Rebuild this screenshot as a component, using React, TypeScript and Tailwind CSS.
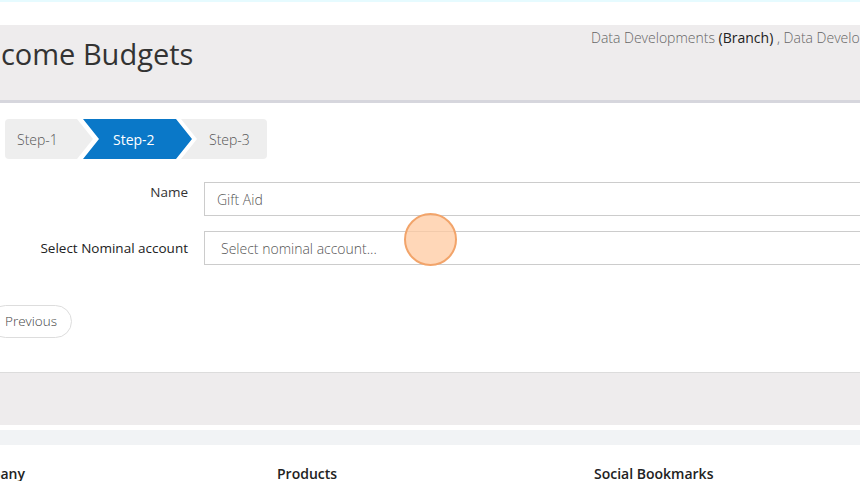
import React from 'react';

const steps = [
  {
    label: 'Step-1',
    active: false,
    className: 'w-[88px] pl-[12px] rounded-l-[4px] [clip-path:polygon(0_0,72px_0,88px_50%,72px_100%,0_100%)]',
  },
  {
    label: 'Step-2',
    active: true,
    className: 'w-[109px] -ml-[10px] pl-[30px] [clip-path:polygon(0_0,93px_0,109px_50%,93px_100%,0_100%,16px_50%)]',
  },
  {
    label: 'Step-3',
    active: false,
    className: 'w-[86px] -ml-[11px] pl-[28px] rounded-r-[4px] [clip-path:polygon(0_0,100%_0,100%_100%,0_100%,16px_50%)]',
  },
];

const App: React.FC = () => {
  return (
    <div className="relative w-[860px] h-[481px] overflow-hidden bg-white font-['Open_Sans',sans-serif] text-[14px] text-[#555]">
      <div className="h-[2px] bg-[#e6fbff]" />

      {/* page header */}
      <div className="mt-[23px] h-[78px] bg-[#eeeced] border-b-[3px] border-[#d6d6dd] flex items-start">
        <h1 className="-ml-[25px] w-[616px] shrink-0 mt-[10px] text-[29px] leading-[38px] text-[#333] font-normal whitespace-nowrap">
          Income Budgets
        </h1>
        <div className="pt-[3px] whitespace-nowrap text-[#666] font-light leading-[20px]">
          Data Developments <span className="text-[#222] font-normal">(Branch)</span> , Data Developments
        </div>
      </div>

      {/* wizard steps */}
      <div className="mt-[16px] ml-[5px] flex h-[40px] font-light">
        {steps.map((s) => (
          <div
            key={s.label}
            className={`h-[40px] flex items-center shrink-0 ${s.className} ${
              s.active ? 'bg-[#0a78c8] text-white font-normal' : 'bg-[#eeeeee] text-[#555]'
            }`}
          >
            {s.label}
          </div>
        ))}
      </div>

      {/* form */}
      <div className="mt-[23px] flex flex-col gap-[15px] text-[13.5px]">
        <div className="flex items-start gap-[16px]">
          <label className="w-[188px] shrink-0 text-right text-[#333]">Name</label>
          <div className="w-[700px] shrink-0 h-[34px] border border-[#cccccc] flex items-center pl-[12px] text-[14px] font-light text-[#555]">
            Gift Aid
          </div>
        </div>
        <div className="flex items-center gap-[16px]">
          <label className="w-[188px] shrink-0 text-right text-[#222]">Select Nominal account</label>
          <div className="w-[700px] shrink-0 h-[34px] border border-[#cccccc] flex items-center pl-[16px] text-[14px] font-light text-[#555]">
            Select nominal account...
          </div>
        </div>
      </div>

      <div className="mt-[40px]">
        <button className="-ml-[11px] h-[33px] pl-[15px] pr-[14px] rounded-full border border-[#dddddd] bg-white font-light text-[13.5px] text-[#444]">
          Previous
        </button>
      </div>

      {/* form footer band */}
      <div className="mt-[34px] h-[53px] border-t border-[#dcdcdc] bg-[#eeeced]" />
      <div className="mt-[5px] h-[15px] bg-[#f1f3f5]" />

      {/* site footer */}
      <div className="mt-[18px] -ml-[39px] flex font-semibold text-[#222]">
        <div className="w-[316px] shrink-0">Company</div>
        <div className="w-[317px] shrink-0">Products</div>
        <div className="shrink-0">Social Bookmarks</div>
      </div>

      {/* click highlight */}
      <div className="absolute left-[404px] top-[213px] w-[53px] h-[53px] rounded-full bg-[#ffc9a0]/75 border-2 border-[#f2a46a]" />
    </div>
  );
};

export default App;
